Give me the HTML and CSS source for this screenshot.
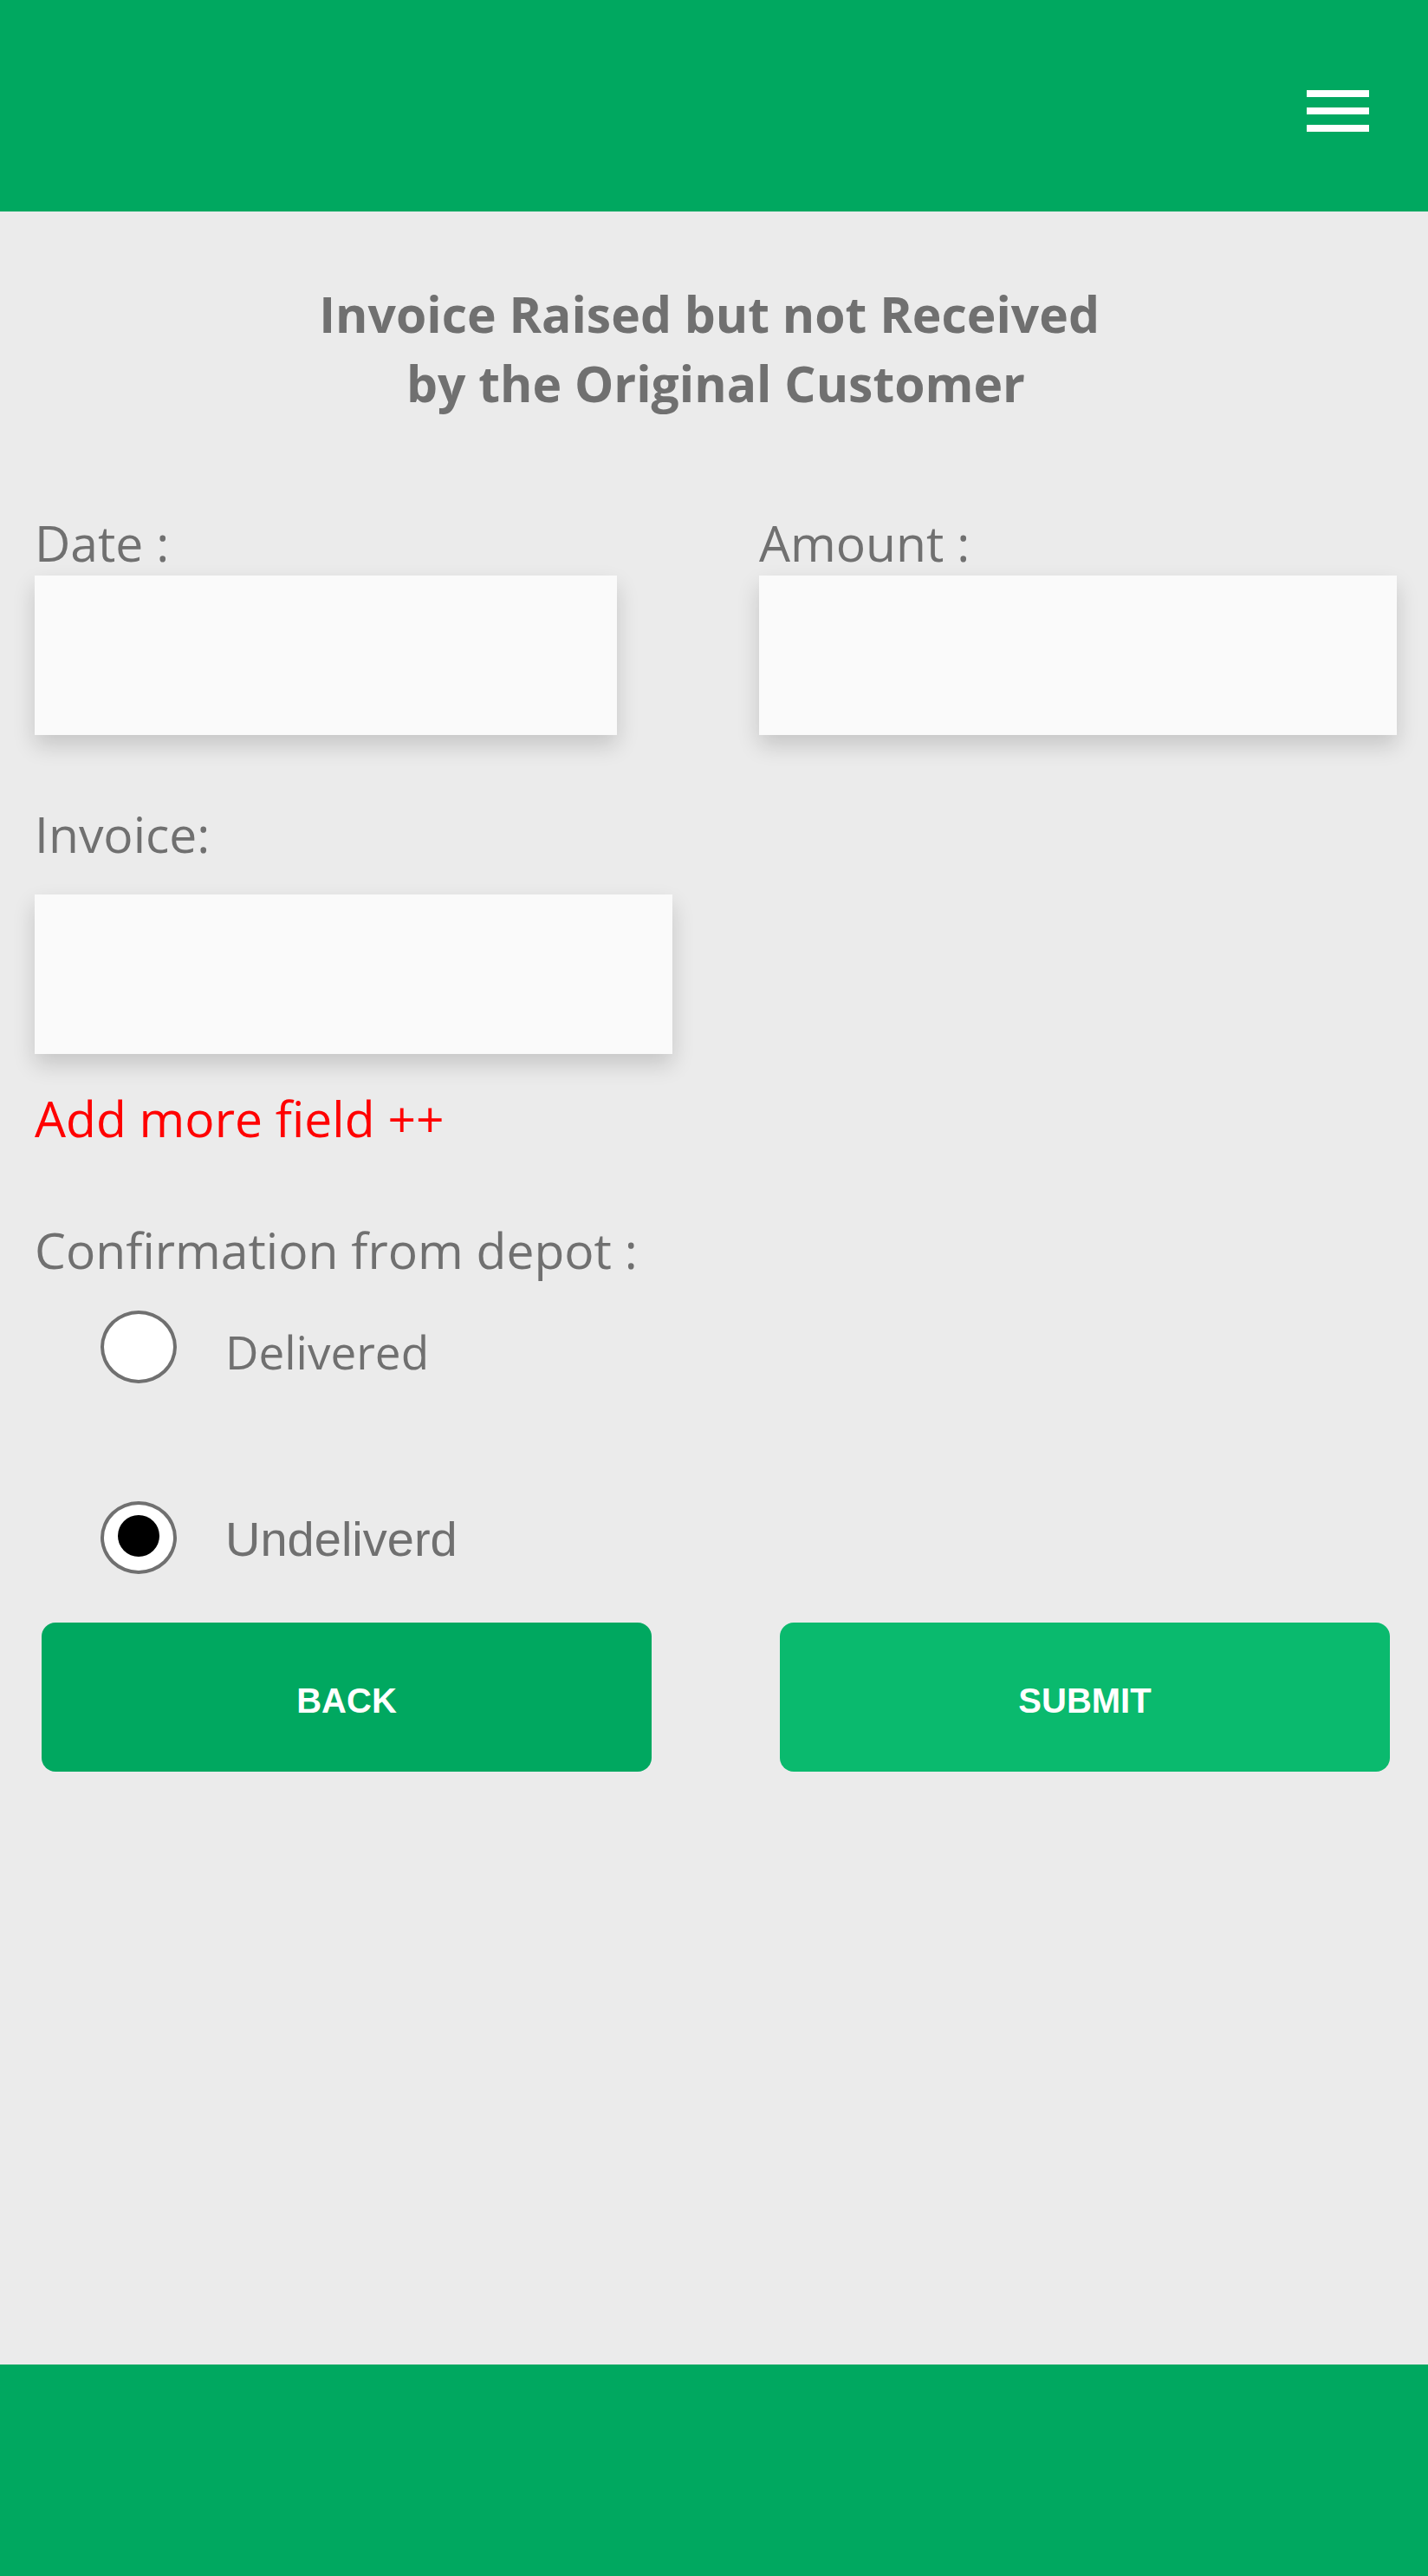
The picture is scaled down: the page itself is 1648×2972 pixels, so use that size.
FILE: index.html
```html
<!DOCTYPE html>
<html lang="en">
<head>
  <meta charset="utf-8">
  <meta name="viewport" content="width=device-width, initial-scale=1">
  <title>Invoice Raised but not Received</title>
  <link rel="stylesheet" href="styles.css">
</head>
<body>
  <header class="topbar">
    <button class="menu" type="button" aria-label="Menu">
      <svg width="72" height="48" viewBox="0 0 72 48" fill="#fff" aria-hidden="true">
        <path d="M0 0h72v8H0zM0 20h72v8H0zM0 40h72v8H0z"/>
      </svg>
    </button>
  </header>
  <main class="page">
    <h1 class="title">Invoice Raised but not Received&nbsp;<br>by the Original Customer</h1>
    <form class="form">
      <div class="columns">
        <div class="field field-date">
          <label class="label" for="date">Date :</label>
          <input class="box" id="date" type="text">
        </div>
        <div class="field">
          <label class="label" for="amount">Amount :</label>
          <input class="box" id="amount" type="text">
        </div>
      </div>
      <div class="columns">
        <div class="field field-invoice">
          <label class="label" for="invoice">Invoice:</label>
          <input class="box" id="invoice" type="text">
        </div>
      </div>
      <button class="add" type="button">Add more field ++</button>
      <fieldset class="depot">
        <legend class="label">Confirmation from depot :</legend>
        <div class="options">
          <label class="option">
            <input class="radio" type="radio" name="depot" value="delivered">
            <span class="option-text">Delivered</span>
          </label>
          <label class="option option-alt">
            <input class="radio" type="radio" name="depot" value="undelivered" checked>
            <span class="option-text">Undeliverd</span>
          </label>
        </div>
      </fieldset>
      <div class="actions">
        <button class="action action-back" type="button">BACK</button>
        <button class="action action-submit" type="submit">SUBMIT</button>
      </div>
    </form>
  </main>
  <footer class="bottombar"></footer>
</body>
</html>
```

FILE: styles.css
```css
* {
  box-sizing: border-box;
}

body {
  display: flex;
  flex-direction: column;
  min-height: 100vh;
  margin: 0;
  background: #ebebeb;
  color: #707070;
  font-family: "Segoe UI", "Open Sans", "Noto Sans", sans-serif;
  font-size: 57px;
  line-height: 80px;
}

button,
input {
  margin: 0;
  border: 0;
  font: inherit;
}

.topbar,
.bottombar {
  flex: none;
  height: 244px;
  background: #00a860;
}

.topbar {
  display: flex;
  justify-content: flex-end;
  align-items: flex-start;
  padding: 104px 68px 0;
}

.menu {
  display: flex;
  padding: 0;
  background: none;
}

.page {
  flex: 1;
  padding: 78px 36px 72px 40px;
}

.title {
  margin: 0 0 104px;
  font-size: 57px;
  font-weight: 700;
  text-align: center;
}

.form,
.field {
  display: flex;
  flex-direction: column;
}

.columns {
  display: grid;
  grid-template-columns: 1fr 1fr;
  gap: 100px;
  margin-bottom: 74px;
}

.columns + .columns {
  margin-bottom: 34px;
}

.field-date {
  padding-right: 64px;
}

.field-invoice {
  gap: 32px;
}

.label {
  height: 78px;
  padding: 0;
}

.box {
  width: 100%;
  height: 184px;
  padding: 0 24px;
  border-radius: 0;
  background: #fafafa;
  color: inherit;
  box-shadow: 0 12px 24px rgba(0, 0, 0, 0.16);
}

.add {
  align-self: flex-start;
  margin-bottom: 72px;
  padding: 0;
  background: none;
  color: #f00;
}

.depot {
  margin: 0 0 56px;
  padding: 0;
  border: 0;
}

.options {
  display: flex;
  flex-direction: column;
  gap: 136px;
  padding: 32px 0 0 76px;
}

.option {
  display: flex;
  align-items: center;
  gap: 56px;
  height: 84px;
  font-size: 53px;
}

.option-text {
  padding-top: 12px;
}

.option-alt {
  font-family: "Liberation Sans", Arial, sans-serif;
  font-size: 56px;
}

.option-alt .option-text {
  padding-top: 4px;
}

.radio {
  appearance: none;
  display: grid;
  place-items: center;
  width: 88px;
  height: 84px;
  padding-bottom: 4px;
  border: 4px solid #707070;
  border-radius: 50%;
  background: #fff;
}

.radio:checked::before {
  content: "";
  width: 48px;
  height: 48px;
  border-radius: 50%;
  background: #000;
}

.actions {
  display: grid;
  grid-template-columns: 1fr 1fr;
  gap: 148px;
  padding: 0 8px;
}

.action {
  height: 172px;
  padding: 8px 0 0;
  border-radius: 16px;
  color: #fff;
  font-family: "Liberation Sans", Arial, sans-serif;
  font-size: 40px;
  font-weight: 700;
}

.action-back {
  background: #00a860;
}

.action-submit {
  background: #0aba6e;
}
```
